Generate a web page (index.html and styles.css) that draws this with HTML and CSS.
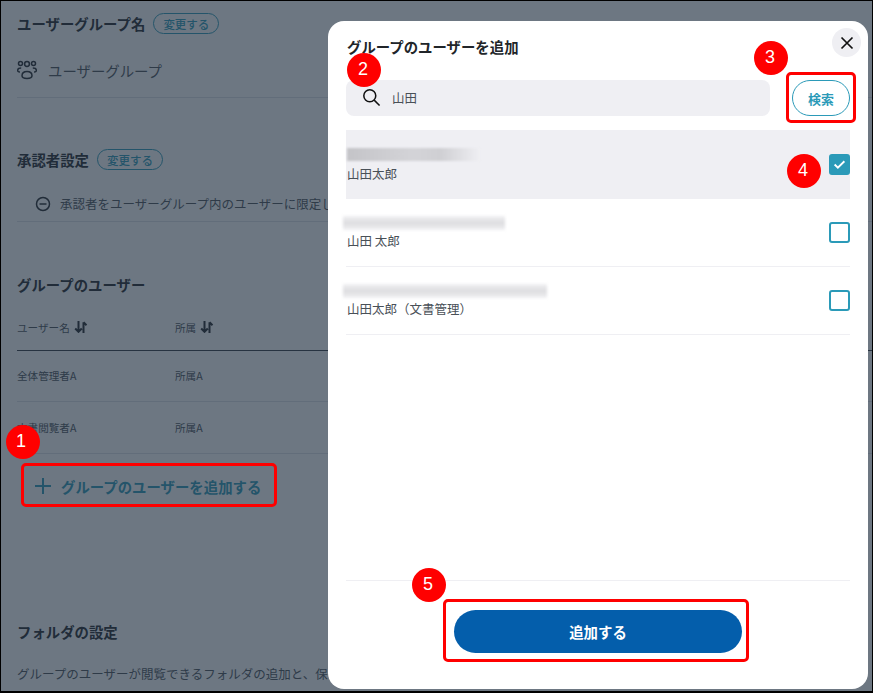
FILE: index.html
```html
<!DOCTYPE html>
<html lang="ja">
<head>
<meta charset="utf-8">
<title>グループのユーザーを追加</title>
<link rel="stylesheet" href="styles.css">
</head>
<body>
<div class="frame">
  <main class="page">
    <section class="sec-name">
      <div class="head"><h2>ユーザーグループ名</h2><span class="pill">変更する</span></div>
      <div class="name-row">
        <svg class="group-ico" viewBox="0 0 20 20" fill="none" stroke="currentColor" stroke-width="1.500"><circle cx="10" cy="4" r="2.400"/><circle cx="3.500" cy="3.500" r="2"/><circle cx="16.500" cy="3.500" r="2"/><path d="M3 12c-1.800 0-2.500-.8-2.300-2 .2-1.400 1.500-2 3.500-2M17 12c1.800 0 2.500-.8 2.300-2-.2-1.400-1.500-2-3.500-2"/><path d="M5 15.800c0-2.800 2.200-4.300 5-4.300s5 1.500 5 4.300c0 1.500-2 2.700-5 2.700s-5-1.200-5-2.700z"/></svg>
        <span>ユーザーグループ</span>
      </div>
    </section>
    <section class="sec-approver">
      <div class="head"><h2>承認者設定</h2><span class="pill">変更する</span></div>
      <div class="approver-row">
        <svg class="minus-ico" viewBox="0 0 16 16" fill="none" stroke="currentColor" stroke-width="1.500"><circle cx="8" cy="8" r="6.500"/><path d="M4.500 8h7"/></svg>
        <span>承認者をユーザーグループ内のユーザーに限定しない設定です</span>
      </div>
    </section>
    <section class="sec-users">
      <h2>グループのユーザー</h2>
      <div class="row thead">
        <div class="c1">ユーザー名<svg class="sort" viewBox="0 0 14 12" fill="none" stroke="currentColor" stroke-width="2"><path d="M4.500 0v10.500M1.200 7.500l3.300 3.300 3.300-3.300M9.500 12v-10.800M9.500 1.200l3 3"/></svg></div>
        <div>所属<svg class="sort" viewBox="0 0 14 12" fill="none" stroke="currentColor" stroke-width="2"><path d="M4.500 0v10.500M1.200 7.500l3.300 3.300 3.300-3.300M9.500 12v-10.800M9.500 1.200l3 3"/></svg></div>
      </div>
      <div class="row tr"><div class="c1">全体管理者A</div><div>所属A</div></div>
      <div class="row tr"><div class="c1">文書閲覧者A</div><div>所属A</div></div>
      <div class="add-link"><span class="plus"></span><span>グループのユーザーを追加する</span></div>
    </section>
    <section class="sec-folder">
      <h2>フォルダの設定</h2>
      <p>グループのユーザーが閲覧できるフォルダの追加と、保存先の設定</p>
    </section>
  </main>

  <div class="scrim"></div>

  <div class="mark-box box1"></div>
  <span class="badge b1">1</span>

  <div class="modal">
    <button class="close" aria-label="閉じる"><svg viewBox="0 0 14 14" fill="none" stroke="currentColor" stroke-width="1.700"><path d="M1.500 1.500l11 11M12.500 1.500l-11 11"/></svg></button>
    <h3>グループのユーザーを追加</h3>
    <div class="search">
      <div class="field">
        <svg class="search-ico" viewBox="0 0 20 20" fill="none" stroke="currentColor" stroke-width="1.600"><circle cx="8.200" cy="8.200" r="6.300"/><path d="M12.800 12.800l5.700 5.700"/></svg>
        <span>山田</span>
      </div>
      <button class="search-btn">検索</button>
    </div>
    <ul class="list">
      <li class="item selected">
        <div class="item-text"><div class="blur w1"></div><div class="uname">山田太郎</div></div>
        <span class="check on"><svg viewBox="0 0 12 10" fill="none" stroke="currentColor" stroke-width="1.700"><path d="M1.500 5l3 3 6-6"/></svg></span>
      </li>
      <li class="item">
        <div class="item-text"><div class="blur w2"></div><div class="uname">山田 太郎</div></div>
        <span class="check"></span>
      </li>
      <li class="item">
        <div class="item-text"><div class="blur w3"></div><div class="uname">山田太郎（文書管理）</div></div>
        <span class="check"></span>
      </li>
    </ul>
    <div class="foot"><button class="submit">追加する</button></div>
  </div>

  <div class="mark-box box3"></div>
  <div class="mark-box box5"></div>
  <span class="badge b2">2</span>
  <span class="badge b3">3</span>
  <span class="badge b4">4</span>
  <span class="badge b5">5</span>
</div>
</body>
</html>
```

FILE: styles.css
```css
* { box-sizing: border-box; }
html, body { margin: 0; padding: 0; }
body {
  width: 873px;
  height: 693px;
  overflow: hidden;
  font-family: "Noto Sans CJK JP", "Noto Sans", sans-serif;
  color: #212529;
}
.frame {
  position: relative;
  width: 873px;
  height: 693px;
  overflow: hidden;
  background: #fff;
}
.frame::after {
  content: "";
  position: absolute;
  inset: 0;
  border: solid #000;
  border-width: 1px 1px 2px 1px;
  pointer-events: none;
}
.page { padding: 0 0 0 17px; }
.scrim { position: absolute; inset: 0; background: rgba(33, 48, 66, 0.66); }
h2 { margin: 0; font-size: 14.4px; font-weight: 700; line-height: 20px; color: #212529; }
.head { display: flex; align-items: center; gap: 8px; }
.pill {
  display: flex;
  align-items: center;
  justify-content: center;
  width: 66px;
  height: 21px;
  border: 1px solid #2b9ab8;
  border-radius: 11px;
  font-size: 11.5px;
  font-weight: 500;
  color: #2b9ab8;
}
.sec-name { padding-top: 13px; }
.name-row {
  display: flex;
  align-items: center;
  gap: 11px;
  height: 64px;
  padding-top: 9px;
  font-size: 14.4px;
  color: #495057;
  border-bottom: 1px solid #dee2e6;
}
.group-ico { width: 20px; height: 20px; color: #212529; }
.sec-approver { padding-top: 51px; }
.approver-row {
  display: flex;
  align-items: center;
  gap: 9px;
  height: 42px;
  margin-top: 10px;
  padding-left: 18px;
  padding-top: 6px;
  font-size: 12.5px;
  color: #495057;
  white-space: nowrap;
  border-bottom: 1px solid #dee2e6;
}
.minus-ico { width: 16px; height: 16px; color: #212529; }
.sec-users { padding-top: 53px; }
.row { display: flex; align-items: center; font-size: 10.6px; color: #495057; }
.c1 { width: 158px; }
.thead { height: 46px; margin-top: 10px; border-bottom: 1px solid #343a40; }
.thead > div { display: flex; align-items: center; }
.sort { width: 14px; height: 12px; margin: -2px 0 0 4px; color: #212529; }
.tr { height: 52px; border-bottom: 1px solid #dee2e6; }
.thead + .tr { height: 51px; padding-bottom: 1px; }
.add-link {
  display: flex;
  align-items: center;
  gap: 10px;
  height: 40px;
  margin: 12px 0 0 18px;
  font-size: 14.4px;
  font-weight: 700;
  color: #2b9ab8;
}
.plus { width: 16px; height: 16px; background: linear-gradient(currentColor, currentColor) center/100% 2px no-repeat, linear-gradient(currentColor, currentColor) center/2px 100% no-repeat; }
.sec-folder { padding-top: 116px; }
.sec-folder p { margin: 22px 0 0; font-size: 12.5px; line-height: 20px; color: #495057; white-space: nowrap; }

.modal {
  position: absolute;
  left: 328px;
  top: 21px;
  width: 540px;
  height: 668px;
  background: #fff;
  border-radius: 16px;
  padding: 16px 18px 0;
  display: flex;
  flex-direction: column;
}
.modal h3 { margin: 0 0 0 1px; font-size: 14.4px; line-height: 20px; font-weight: 700; color: #212529; }
.close {
  position: absolute;
  right: 7px;
  top: 7px;
  width: 29px;
  height: 29px;
  padding: 0;
  border: 0;
  border-radius: 50%;
  background: #efeff3;
  color: #111;
  display: flex;
  align-items: center;
  justify-content: center;
}
.close svg { width: 14px; height: 14px; }
.search { display: flex; gap: 22px; margin-top: 23px; width: 504px; }
.field {
  display: flex;
  align-items: center;
  gap: 11px;
  flex: 1;
  height: 36px;
  padding: 0 0 1px 16px;
  background: #efeff3;
  border-radius: 8px;
  font-size: 12.5px;
  color: #495057;
}
.search-ico { width: 19px; height: 19px; color: #111; }
.search-btn {
  width: 58px;
  height: 36px;
  padding: 0;
  border: 1px solid #2b9ab8;
  border-radius: 18px;
  background: #fff;
  font: 700 13px "Noto Sans CJK JP", sans-serif;
  color: #2b9ab8;
}
.list { list-style: none; margin: 14px 0 0; padding: 0; width: 504px; flex: 1; }
.item {
  display: flex;
  align-items: center;
  justify-content: space-between;
  height: 68px;
  padding-left: 1px;
  border-bottom: 1px solid #efeff3;
  font-size: 12.5px;
  color: #495057;
}
.item.selected { height: 69px; background: #efeff3; border-bottom: 0; }
.item-text { display: flex; flex-direction: column; padding-top: 1px; }
.blur { height: 14px; }
.w1 { width: 133px; height: 13px; margin-bottom: 2px; background: linear-gradient(90deg, #c4c4c8, #d4d4d8 50%, #cfcfd3 70%, #efeff3); filter: blur(1px); }
.w2 { width: 162px; margin-left: -4px; background: linear-gradient(#f1f1f3, #dcdcdf 50%, #f1f1f3); filter: blur(1.500px); }
.w3 { width: 204px; margin-left: -4px; background: linear-gradient(#f1f1f3, #dcdcdf 50%, #f1f1f3); filter: blur(1.500px); }
.uname { line-height: 18px; margin-top: 2px; }
.check {
  width: 21px;
  height: 21px;
  border: 2px solid #2b9ab8;
  border-radius: 3px;
  display: flex;
  align-items: center;
  justify-content: center;
  background: #fff;
  color: #fff;
}
.check.on { background: #2b9ab8; }
.check.on svg { width: 13px; height: 11px; flex: none; }
.foot {
  display: flex;
  justify-content: center;
  align-items: flex-start;
  width: 504px;
  height: 109px;
  padding-top: 29px;
  border-top: 1px solid #efeff3;
}
.submit {
  width: 288px;
  height: 43px;
  border: 0;
  border-radius: 22px;
  background: #045eab;
  color: #fff;
  font: 700 14.4px "Noto Sans CJK JP", sans-serif;
}

.mark-box { position: absolute; border: 3px solid #f00; border-radius: 5px; }
.box1 { left: 21px; top: 463px; width: 256px; height: 44px; }
.box3 { left: 786px; top: 72px; width: 70px; height: 51px; }
.box5 { left: 443px; top: 599px; width: 306px; height: 63px; }
.badge {
  position: absolute;
  width: 34px;
  height: 34px;
  padding-right: 2px;
  border-radius: 50%;
  background: #f00;
  color: #fff;
  font: 400 18px/32px "Liberation Sans", sans-serif;
  text-align: center;
}
.b1 { left: 6px; top: 425px; padding-right: 4px; }
.b2 { left: 347px; top: 53px; }
.b3 { left: 754px; top: 41px; }
.b4 { left: 787px; top: 154px; }
.b5 { left: 412px; top: 568px; }
```
